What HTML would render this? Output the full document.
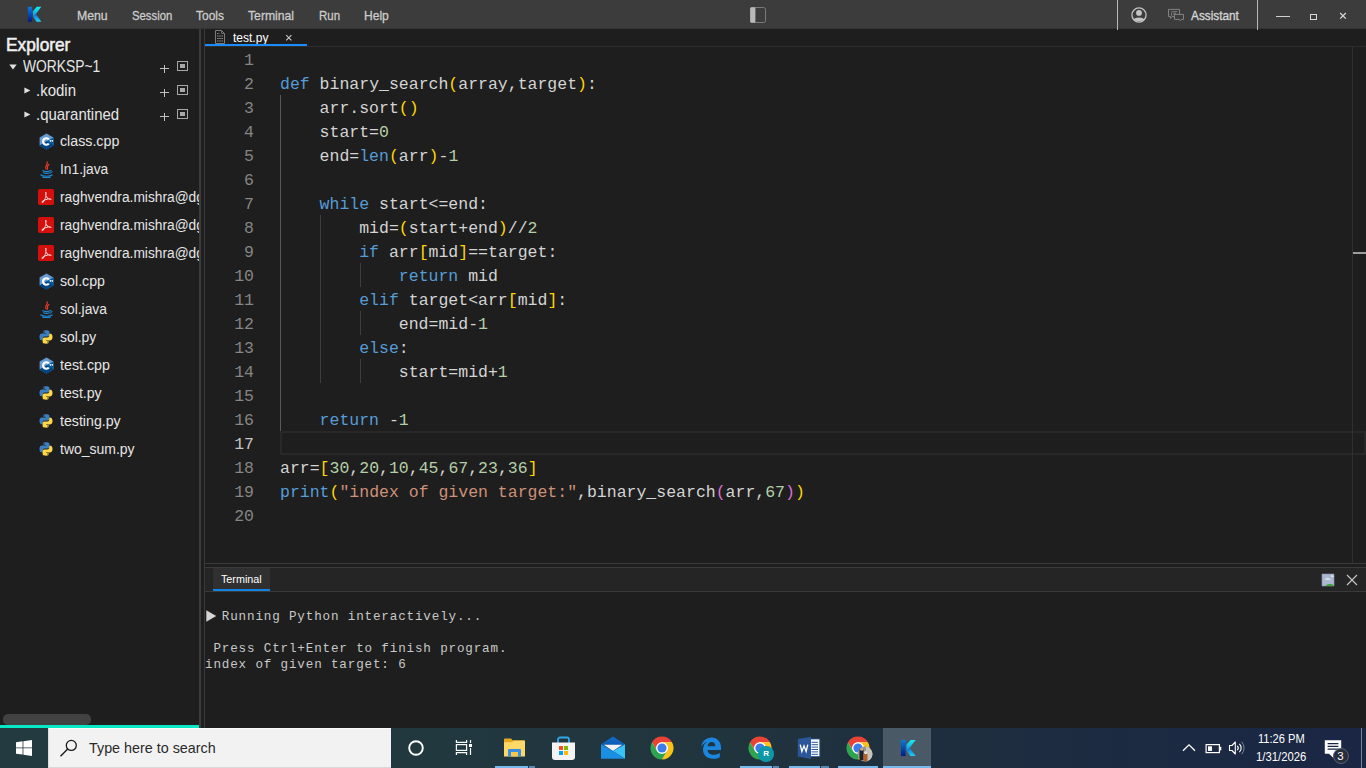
<!DOCTYPE html>
<html lang="en">
<head>
<meta charset="utf-8">
<title>test.py</title>
<style>
*{box-sizing:border-box;margin:0;padding:0}
html,body{width:1366px;height:768px;overflow:hidden;background:#1e1e1e;font-family:"Liberation Sans",sans-serif}
.abs{position:absolute}
.t{position:absolute;white-space:nowrap;transform-origin:0 50%}
#sidebar{position:absolute;left:0;top:0;width:199px;height:728px;overflow:hidden}
.ln{position:absolute;left:205px;width:49px;text-align:right;height:24px;line-height:24px;font-family:"Liberation Mono",monospace;font-size:16.5px;color:#858585}
.cl{position:absolute;left:280px;height:24px;line-height:24px;font-family:"Liberation Mono",monospace;font-size:16.5px;color:#d4d4d4;white-space:pre}
.k{color:#569cd6}.n{color:#b5cea8}.s{color:#ce9178}.y{color:#ffd700}.p{color:#da70d6}
.guide{position:absolute;width:1px;background:#404040}
.tl{position:absolute;left:205px;height:16px;line-height:16px;font-family:"Liberation Mono",monospace;font-size:12.6px;letter-spacing:0.84px;color:#c8c8c8;white-space:pre}
#taskbar{position:absolute;left:0;top:728px;width:1366px;height:40px;background:linear-gradient(90deg,#233a41 0%,#22383f 32%,#20343e 54%,#1e2e3e 69%,#1c2a42 84%,#1a2644 100%)}
.run{position:absolute;top:38px;height:2px;background:#76b9ed}
</style>
</head>
<body>
<div class="abs" style="left:0;top:0;width:1366px;height:28px;background:#3c3c3c"></div>
<div class="abs" style="left:0;top:28px;width:1366px;height:1px;background:#343434"></div>
<svg class="abs" style="left:26px;top:5px" width="17" height="18" viewBox="0 0 17 18">
<defs><linearGradient id="kg1" x1="0" y1="0" x2="0" y2="1"><stop offset="0" stop-color="#0b7cdc"/><stop offset="1" stop-color="#021a80"/></linearGradient>
<linearGradient id="kg2" x1="0" y1="0" x2="0" y2="1"><stop offset="0" stop-color="#12f2f2"/><stop offset="1" stop-color="#1a8ee0"/></linearGradient>
<linearGradient id="kg3" x1="0" y1="0" x2="0" y2="1"><stop offset="0" stop-color="#0a6ed0"/><stop offset="1" stop-color="#22d4f4"/></linearGradient></defs>
<rect x="1.800" y="1.800" width="4.300" height="14.900" fill="url(#kg1)"/>
<path d="M10.800 1.800 H15.300 L10 9.100 L6.900 11.400 V6.300 Z" fill="url(#kg2)"/>
<path d="M6.900 11.400 L10 9.100 L15.300 16.700 H10.600 Z" fill="url(#kg3)"/></svg>
<div class="t" style="left:76.70px;top:7.79px;height:16px;line-height:16px;font-size:13.3px;color:#cccccc;-webkit-text-stroke:0.3px #cccccc;transform:scaleX(0.923);">Menu</div>
<div class="t" style="left:131.70px;top:7.79px;height:16px;line-height:16px;font-size:13.3px;color:#cccccc;-webkit-text-stroke:0.3px #cccccc;transform:scaleX(0.852);">Session</div>
<div class="t" style="left:196.00px;top:7.79px;height:16px;line-height:16px;font-size:13.3px;color:#cccccc;-webkit-text-stroke:0.3px #cccccc;transform:scaleX(0.902);">Tools</div>
<div class="t" style="left:248.30px;top:7.79px;height:16px;line-height:16px;font-size:13.3px;color:#cccccc;-webkit-text-stroke:0.3px #cccccc;transform:scaleX(0.917);">Terminal</div>
<div class="t" style="left:318.80px;top:7.79px;height:16px;line-height:16px;font-size:13.3px;color:#cccccc;-webkit-text-stroke:0.3px #cccccc;transform:scaleX(0.861);">Run</div>
<div class="t" style="left:364.40px;top:7.79px;height:16px;line-height:16px;font-size:13.3px;color:#cccccc;-webkit-text-stroke:0.3px #cccccc;transform:scaleX(0.907);">Help</div>
<svg class="abs" style="left:749px;top:6px" width="18" height="18" viewBox="0 0 18 18"><rect x="1.500" y="1.500" width="15" height="15" rx="1.800" fill="none" stroke="#7a7a7a" stroke-width="1"/><rect x="1.200" y="1.200" width="5.200" height="15.600" rx="1.200" fill="#b8b8b8"/></svg>
<div class="abs" style="left:1117px;top:0;width:1px;height:30px;background:#b8b8b8"></div>
<svg class="abs" style="left:1130px;top:6px" width="18" height="18" viewBox="0 0 18 18"><circle cx="9" cy="9" r="7.100" fill="none" stroke="#c4c4c4" stroke-width="1.300"/><circle cx="9" cy="6.900" r="2.900" fill="#c4c4c4"/><path d="M3.600 13.600 C5 10.700 13 10.700 14.400 13.600 C13 15.800 5 15.800 3.600 13.600Z" fill="#c4c4c4"/></svg>
<svg class="abs" style="left:1167px;top:8px" width="18" height="14" viewBox="0 0 18 14"><path d="M1.500 1.400 H12.500 V8.600 H5 L3.600 10.400 V8.600 H1.500Z" fill="none" stroke="#828282" stroke-width="1"/><path d="M4.500 7.800 V4.600 a1 1 0 0 1 1 -1 H10.200" fill="none" stroke="#7a7a7a" stroke-width="1"/><circle cx="7.600" cy="5.800" r="1.500" fill="#6a6a6a"/><path d="M7.500 6.400 H16.500 V11.400 H14.600 L13.300 12.900 L12.400 11.400 H7.500Z" fill="#3c3c3c" stroke="#828282" stroke-width="1"/></svg>
<div class="t" style="left:1191.00px;top:8.19px;height:16px;line-height:16px;font-size:13.3px;color:#d4d4d4;-webkit-text-stroke:0.35px #d4d4d4;transform:scaleX(0.888);">Assistant</div>
<div class="abs" style="left:1257px;top:0;width:1px;height:30px;background:#b8b8b8"></div>
<div class="abs" style="left:1276px;top:16px;width:14px;height:1px;background:#d0d0d0"></div>
<div class="abs" style="left:1310px;top:14px;width:7px;height:6px;border:1px solid #d8d8d8"></div>
<svg class="abs" style="left:1339px;top:12px" width="8" height="8" viewBox="0 0 8 8"><path d="M1.200 1 L6.800 6.600 M6.800 1 L1.200 6.600" stroke="#d8d8d8" stroke-width="1.300"/></svg>
<div id="sidebar">
<svg width="0" height="0" style="position:absolute"><defs>
<symbol id="i-cpp" viewBox="0 0 32 32"><path d="M16 1 L29 8.500 V23.500 L16 31 L3 23.500 V8.500 Z" fill="#659ad2"/><path d="M29 8.500 V23.500 L16 31 L3 23.500 Z" fill="#00599c"/><path d="M16 16 L29 23.500 L16 31 L3 23.500 Z" fill="#004482"/><path d="M22.200 11.200 A8.200 8.200 0 1 0 22.200 20.800 L18.600 18.700 A4 4 0 1 1 18.600 13.300 Z" fill="#fff"/><path d="M21.300 14.300 h1.300 v-1.300 h1.300 v1.300 h1.300 v1.300 h-1.300 v1.300 h-1.300 v-1.300 h-1.300 z M25.400 14.300 h1.000 v-1.300 h1.100 v1.300 h1.000 v1.300 h-1.000 v1.300 h-1.100 v-1.300 h-1.000 z" fill="#fff"/></symbol>
<symbol id="i-java" viewBox="0 0 32 32"><path d="M17 1.500 C20.500 6 11 9 15.500 15.500 M20.500 6.500 C15.500 10 19 12 17.800 15.500" fill="none" stroke="#e33a2c" stroke-width="2.200" stroke-linecap="round"/><path d="M9 18.500 C12 20.300 20 20.300 23 18.500 M10.500 22.300 C13 23.800 19 23.800 21.500 22.300 M5.500 26.300 C9 29.600 23 29.600 26.500 26.300 M9 30.500 C13 31.500 19 31.500 23 30.500" fill="none" stroke="#1f8ad6" stroke-width="2.200" stroke-linecap="round"/><path d="M23.500 18.500 C28 17.500 27.500 22 23 22.800" fill="none" stroke="#1f8ad6" stroke-width="1.800" stroke-linecap="round"/></symbol>
<symbol id="i-pdf" viewBox="0 0 32 32"><rect x="0" y="0" width="32" height="32" rx="3.500" fill="#d4100c"/><path d="M15.200 6.200 C17.600 5.600 17.600 9.800 16.400 13.200 C17.600 16 19.600 18 21.600 19 C24.500 18.600 27.200 19.200 26.800 21 C26.300 22.800 23.500 22.200 21.200 20.600 C18.600 21 15.800 21.800 13.400 22.800 C11.600 26 9.200 28.200 7.600 27.200 C6 26 8.800 23.400 12.200 22 C13.400 19.600 14.600 16.600 15.200 13.800 C14.200 11 13.600 6.800 15.200 6.200Z M15.800 7.400 C15.200 8 15.400 10.400 15.900 12 C16.400 10.200 16.400 7.600 15.800 7.400Z M16 15.400 C15.400 17.400 14.600 19.400 13.800 21.200 C15.800 20.400 17.800 19.900 19.800 19.500 C18.300 18.500 17 17 16 15.400Z M22.800 20.200 C24.200 21 25.600 21.200 25.800 20.800 C26 20.400 24.600 20 22.800 20.200Z M11.600 23.600 C9.600 24.600 8.200 26 8.500 26.400 C8.900 26.700 10.400 25.600 11.600 23.600Z" fill="#fff"/></symbol>
<symbol id="i-py" viewBox="0 0 32 32"><path d="M15.800 2.500 C10.500 2.500 10.800 4.800 10.800 4.800 V8.200 H16 V9.200 H7.600 C7.600 9.200 3 8.800 3 15.800 C3 22.800 7 22.400 7 22.400 H9.600 V19 C9.600 19 9.400 15 13.600 15 H19 C19 15 22.800 15.100 22.800 11.300 V5.800 C22.800 5.800 23.400 2.500 15.800 2.500Z M12.600 4.800 A1.100 1.100 0 1 1 12.600 7 A1.100 1.100 0 0 1 12.600 4.800Z" fill="#3c7ebf"/><path d="M16.200 29.500 C21.500 29.500 21.200 27.200 21.200 27.200 V23.800 H16 V22.800 H24.400 C24.400 22.800 29 23.200 29 16.200 C29 9.200 25 9.600 25 9.600 H22.400 V13 C22.400 13 22.600 17 18.400 17 H13 C13 17 9.200 16.900 9.200 20.700 V26.200 C9.200 26.200 8.600 29.500 16.200 29.500Z M19.400 27.200 A1.100 1.100 0 1 1 19.400 25 A1.100 1.100 0 0 1 19.400 27.200Z" fill="#ffd848"/></symbol>
</defs></svg>
<div class="t" style="left:6.10px;top:33.12px;height:23px;line-height:23px;font-size:19px;color:#f0f0f0;-webkit-text-stroke:0.55px #f0f0f0;transform:scaleX(0.91);">Explorer</div>
<svg class="abs" style="left:9px;top:64px" width="8" height="6" viewBox="0 0 8 6"><path d="M0.300 0.600 H7.700 L4 5.400Z" fill="#e0e0e0"/></svg>
<div class="t" style="left:22.50px;top:56.42px;height:20px;line-height:20px;font-size:16.4px;color:#e6e6e6;transform:scaleX(0.844);">WORKSP~1</div>
<svg class="abs" style="left:23.500px;top:87px" width="7" height="7" viewBox="0 0 7 7"><path d="M0.400 0.600 V6.400 L6.400 3.500Z" fill="#e0e0e0"/></svg>
<div class="t" style="left:36.20px;top:80.12px;height:20px;line-height:20px;font-size:16.4px;color:#e6e6e6;transform:scaleX(0.915);">.kodin</div>
<svg class="abs" style="left:23.500px;top:111px" width="7" height="7" viewBox="0 0 7 7"><path d="M0.400 0.600 V6.400 L6.400 3.500Z" fill="#e0e0e0"/></svg>
<div class="t" style="left:36.20px;top:104.12px;height:20px;line-height:20px;font-size:16.4px;color:#e6e6e6;transform:scaleX(0.912);">.quarantined</div>
<div class="abs" style="left:160px;top:68px;width:9px;height:1px;background:#c0c0c0"></div><div class="abs" style="left:164px;top:65px;width:1px;height:8px;background:#c0c0c0"></div>
<div class="abs" style="left:177px;top:61px;width:11px;height:10px;border:1px solid #a8a8a8"></div><div class="abs" style="left:180px;top:64px;width:5px;height:4px;background:#a8a8a8"></div>
<div class="abs" style="left:160px;top:92px;width:9px;height:1px;background:#c0c0c0"></div><div class="abs" style="left:164px;top:89px;width:1px;height:8px;background:#c0c0c0"></div>
<div class="abs" style="left:177px;top:85px;width:11px;height:10px;border:1px solid #a8a8a8"></div><div class="abs" style="left:180px;top:88px;width:5px;height:4px;background:#a8a8a8"></div>
<div class="abs" style="left:160px;top:116px;width:9px;height:1px;background:#c0c0c0"></div><div class="abs" style="left:164px;top:113px;width:1px;height:8px;background:#c0c0c0"></div>
<div class="abs" style="left:177px;top:109px;width:11px;height:10px;border:1px solid #a8a8a8"></div><div class="abs" style="left:180px;top:112px;width:5px;height:4px;background:#a8a8a8"></div>
<svg class="abs" style="left:37.500px;top:132.5px" width="17" height="17"><use href="#i-cpp"/></svg>
<div class="t" style="left:60.20px;top:132.10px;height:18px;line-height:18px;font-size:15.3px;color:#e6e6e6;transform:scaleX(0.93);">class.cpp</div>
<svg class="abs" style="left:38px;top:160.5px" width="17" height="17"><use href="#i-java"/></svg>
<div class="t" style="left:60.20px;top:160.10px;height:18px;line-height:18px;font-size:15.3px;color:#e6e6e6;transform:scaleX(0.901);">In1.java</div>
<svg class="abs" style="left:38px;top:189px" width="16" height="16"><use href="#i-pdf"/></svg>
<div class="t" style="left:60.20px;top:188.10px;height:18px;line-height:18px;font-size:15.3px;color:#e6e6e6;transform:scaleX(0.899);">raghvendra.mishra@dg</div>
<svg class="abs" style="left:38px;top:217px" width="16" height="16"><use href="#i-pdf"/></svg>
<div class="t" style="left:60.20px;top:216.10px;height:18px;line-height:18px;font-size:15.3px;color:#e6e6e6;transform:scaleX(0.899);">raghvendra.mishra@dg</div>
<svg class="abs" style="left:38px;top:245px" width="16" height="16"><use href="#i-pdf"/></svg>
<div class="t" style="left:60.20px;top:244.10px;height:18px;line-height:18px;font-size:15.3px;color:#e6e6e6;transform:scaleX(0.899);">raghvendra.mishra@dg</div>
<svg class="abs" style="left:37.500px;top:272.5px" width="17" height="17"><use href="#i-cpp"/></svg>
<div class="t" style="left:60.20px;top:272.10px;height:18px;line-height:18px;font-size:15.3px;color:#e6e6e6;transform:scaleX(0.928);">sol.cpp</div>
<svg class="abs" style="left:38px;top:300.5px" width="17" height="17"><use href="#i-java"/></svg>
<div class="t" style="left:60.20px;top:300.10px;height:18px;line-height:18px;font-size:15.3px;color:#e6e6e6;transform:scaleX(0.906);">sol.java</div>
<svg class="abs" style="left:38px;top:329px" width="16" height="16"><use href="#i-py"/></svg>
<div class="t" style="left:60.20px;top:328.10px;height:18px;line-height:18px;font-size:15.3px;color:#e6e6e6;transform:scaleX(0.906);">sol.py</div>
<svg class="abs" style="left:37.500px;top:356.5px" width="17" height="17"><use href="#i-cpp"/></svg>
<div class="t" style="left:60.20px;top:356.10px;height:18px;line-height:18px;font-size:15.3px;color:#e6e6e6;transform:scaleX(0.933);">test.cpp</div>
<svg class="abs" style="left:38px;top:385px" width="16" height="16"><use href="#i-py"/></svg>
<div class="t" style="left:60.20px;top:384.10px;height:18px;line-height:18px;font-size:15.3px;color:#e6e6e6;transform:scaleX(0.925);">test.py</div>
<svg class="abs" style="left:38px;top:413px" width="16" height="16"><use href="#i-py"/></svg>
<div class="t" style="left:60.20px;top:412.10px;height:18px;line-height:18px;font-size:15.3px;color:#e6e6e6;transform:scaleX(0.927);">testing.py</div>
<svg class="abs" style="left:38px;top:441px" width="16" height="16"><use href="#i-py"/></svg>
<div class="t" style="left:60.20px;top:440.10px;height:18px;line-height:18px;font-size:15.3px;color:#e6e6e6;transform:scaleX(0.913);">two_sum.py</div>
<div class="abs" style="left:3px;top:714px;width:88px;height:11px;border-radius:5px;background:#424242"></div>
<div class="abs" style="left:0;top:725px;width:199px;height:3px;background:#08e8c4"></div>
</div>
<div class="abs" style="left:199px;top:29px;width:2px;height:699px;background:#3c3c3c"></div>
<div class="abs" style="left:204px;top:29px;width:1px;height:699px;background:#393939"></div>
<div class="abs" style="left:205px;top:46px;width:1161px;height:1px;background:#2e2e2e"></div>
<svg class="abs" style="left:215px;top:30px" width="10" height="14" viewBox="0 0 10 14"><path d="M0.500 0.500 H6.500 L9.500 3.500 V13.500 H0.500Z" fill="none" stroke="#7c7c7c" stroke-width="1"/><path d="M6.500 0.500 V3.500 H9.500" fill="none" stroke="#7c7c7c" stroke-width="0.800"/><path d="M2 6 H8 M2 8.500 H8 M2 11 H8 M2 3.500 H4.500" stroke="#8a8a8a" stroke-width="1.200" stroke-dasharray="1.600 0.600"/></svg>
<div class="t" style="left:233.00px;top:29.90px;height:16px;line-height:16px;font-size:13px;color:#ffffff;transform:scaleX(0.924);">test.py</div>
<svg class="abs" style="left:285px;top:34px" width="8" height="8" viewBox="0 0 8 8"><path d="M1.200 1.200 L6.400 6.400 M6.400 1.200 L1.200 6.400" stroke="#cccccc" stroke-width="1.050"/></svg>
<div class="abs" style="left:205px;top:44px;width:102px;height:2px;background:#1a8cff"></div>
<div class="abs" style="left:280px;top:431px;width:1086px;height:24px;border:2px solid #282828"></div>
<div class="abs" style="left:1352px;top:47px;width:1px;height:516px;background:#303030"></div>
<div class="abs" style="left:1353px;top:252px;width:13px;height:2px;background:#9c9c9a"></div>
<div class="guide" style="background:#585858;left:280px;top:95px;height:336px"></div>
<div class="guide" style="background:#3e3e3e;left:320px;top:215px;height:168px"></div>
<div class="guide" style="background:#3e3e3e;left:360px;top:263px;height:24px"></div>
<div class="guide" style="background:#3e3e3e;left:360px;top:311px;height:24px"></div>
<div class="guide" style="background:#3e3e3e;left:360px;top:359px;height:24px"></div>
<div class="ln" style="top:49px">1</div>
<div class="ln" style="top:73px">2</div><div class="cl" style="top:73px"><span class="k">def</span> binary_search<span class="y">(</span>array,target<span class="y">)</span>:</div>
<div class="ln" style="top:97px">3</div><div class="cl" style="top:97px">    arr.sort<span class="y">()</span></div>
<div class="ln" style="top:121px">4</div><div class="cl" style="top:121px">    start=<span class="n">0</span></div>
<div class="ln" style="top:145px">5</div><div class="cl" style="top:145px">    end=<span class="k">len</span><span class="y">(</span>arr<span class="y">)</span>-<span class="n">1</span></div>
<div class="ln" style="top:169px">6</div>
<div class="ln" style="top:193px">7</div><div class="cl" style="top:193px">    <span class="k">while</span> start&lt;=end:</div>
<div class="ln" style="top:217px">8</div><div class="cl" style="top:217px">        mid=<span class="y">(</span>start+end<span class="y">)</span>//<span class="n">2</span></div>
<div class="ln" style="top:241px">9</div><div class="cl" style="top:241px">        <span class="k">if</span> arr<span class="y">[</span>mid<span class="y">]</span>==target:</div>
<div class="ln" style="top:265px">10</div><div class="cl" style="top:265px">            <span class="k">return</span> mid</div>
<div class="ln" style="top:289px">11</div><div class="cl" style="top:289px">        <span class="k">elif</span> target&lt;arr<span class="y">[</span>mid<span class="y">]</span>:</div>
<div class="ln" style="top:313px">12</div><div class="cl" style="top:313px">            end=mid-<span class="n">1</span></div>
<div class="ln" style="top:337px">13</div><div class="cl" style="top:337px">        <span class="k">else</span>:</div>
<div class="ln" style="top:361px">14</div><div class="cl" style="top:361px">            start=mid+<span class="n">1</span></div>
<div class="ln" style="top:385px">15</div>
<div class="ln" style="top:409px">16</div><div class="cl" style="top:409px">    <span class="k">return</span> -<span class="n">1</span></div>
<div class="ln" style="top:433px;color:#c6c6c6">17</div>
<div class="ln" style="top:457px">18</div><div class="cl" style="top:457px">arr=<span class="y">[</span><span class="n">30</span>,<span class="n">20</span>,<span class="n">10</span>,<span class="n">45</span>,<span class="n">67</span>,<span class="n">23</span>,<span class="n">36</span><span class="y">]</span></div>
<div class="ln" style="top:481px">19</div><div class="cl" style="top:481px"><span class="k">print</span><span class="y">(</span><span class="s">"index of given target:"</span>,binary_search<span class="p">(</span>arr,<span class="n">67</span><span class="p">)</span><span class="y">)</span></div>
<div class="ln" style="top:505px">20</div>
<div class="abs" style="left:205px;top:563px;width:1161px;height:1px;background:#3a3a3a"></div>
<div class="abs" style="left:205px;top:567px;width:1161px;height:1px;background:#3a3a3a"></div>
<div class="abs" style="left:205px;top:568px;width:1161px;height:23px;background:#252526"></div>
<div class="abs" style="left:205px;top:591px;width:1161px;height:1px;background:#3a3a3a"></div>
<div class="abs" style="left:213px;top:568px;width:57px;height:21px;background:#303030"></div>
<div class="abs" style="left:213px;top:589px;width:57px;height:2px;background:#0f84e4"></div>
<div class="t" style="left:221.40px;top:572.01px;height:14px;line-height:14px;font-size:11.8px;color:#ffffff;transform:scaleX(0.911);">Terminal</div>
<svg class="abs" style="left:1321px;top:573px" width="14" height="14" viewBox="0 0 14 14"><rect x="1" y="1" width="12" height="12" fill="#a9b7d1"/><path d="M1 1 H13 V13 H1Z" fill="none" stroke="#8d96a8" stroke-width="0.600"/><path d="M10.500 1 V4 H13Z" fill="#e8e8e8"/><path d="M4 7 C4 5 7 4 8 5.500 C9.500 5 10 7 9 7Z" fill="#dcdcdc"/><path d="M4.500 13 C6 10.500 11 10.500 12.800 12.500 V13Z" fill="#3fa33a"/></svg>
<svg class="abs" style="left:1346px;top:574px" width="12" height="12" viewBox="0 0 12 12"><path d="M1 1 L11 11 M11 1 L1 11" stroke="#c8c8c8" stroke-width="1.100"/></svg>
<svg class="abs" style="left:206px;top:609.500px" width="11" height="12" viewBox="0 0 11 12"><path d="M0.300 0.300 V11.700 L10.300 6Z" fill="#d4d4d4"/></svg>
<div class="tl" style="top:609px">  Running Python interactively...</div>
<div class="tl" style="top:641px"> Press Ctrl+Enter to finish program.</div>
<div class="tl" style="top:657px">index of given target: 6</div>
<div id="taskbar">
<svg width="0" height="0" style="position:absolute"><defs>
<symbol id="i-chrome" viewBox="0 0 48 48"><circle cx="24" cy="24" r="22" fill="#fff"/>
<path d="M4.080 12.500 A23 23 0 0 1 43.920 12.500 L24 12.500 A11.500 11.500 0 0 0 14.040 29.750 Z" fill="#ea4335"/>
<path d="M43.920 12.500 A23 23 0 0 1 24 47 L33.960 29.750 A11.500 11.500 0 0 0 24 12.500 Z" fill="#fbc116"/>
<path d="M24 47 A23 23 0 0 1 4.080 12.500 L14.040 29.750 A11.500 11.500 0 0 0 33.960 29.750 Z" fill="#2da44e"/>
<circle cx="24" cy="24" r="11.600" fill="#fff"/><circle cx="24" cy="24" r="9.200" fill="#3b7ded"/></symbol>
<linearGradient id="kt1" x1="0" y1="0" x2="0" y2="1"><stop offset="0" stop-color="#1a78d6"/><stop offset="1" stop-color="#0b318a"/></linearGradient>
<linearGradient id="kt2" x1="0" y1="0" x2="1" y2="1"><stop offset="0" stop-color="#22e0ea"/><stop offset="1" stop-color="#1c8fdc"/></linearGradient>
</defs></svg>
<svg class="abs" style="left:16px;top:12px" width="16" height="16" viewBox="0 0 18 18"><path d="M0 2.600 L7.400 1.500 V8.500 H0Z M8.300 1.400 L18 0 V8.500 H8.300Z M0 9.400 H7.400 V16.400 L0 15.400Z M8.300 9.400 H18 V18 L8.300 16.600Z" fill="#fff"/></svg>
<div class="abs" style="left:48px;top:0;width:343px;height:40px;background:#f2f2f2;border-left:1px solid #dcdcdc;border-top:1px solid #fafafa;border-bottom:1px solid #d8d8d8"></div>
<svg class="abs" style="left:59px;top:10px" width="20" height="20" viewBox="0 0 20 20"><circle cx="12.300" cy="7.400" r="5" fill="none" stroke="#1a1a1a" stroke-width="1.300"/><path d="M8.700 11 L1.500 18.200" stroke="#1a1a1a" stroke-width="1.400"/></svg>
<svg class="abs" style="left:406px;top:10px" width="20" height="20" viewBox="0 0 20 20"><circle cx="10" cy="10" r="6.800" fill="none" stroke="#fff" stroke-width="1.900"/></svg>
<svg class="abs" style="left:455px;top:11px" width="18" height="17" viewBox="0 0 18 17"><path d="M1.400 1 V3.400 H11.600 V1 M1.400 16.100 V13.700 H11.600 V16.100" stroke="#fff" stroke-width="1.200" fill="none"/><rect x="1.400" y="5.600" width="10.200" height="5.800" fill="none" stroke="#fff" stroke-width="1.200"/><path d="M15.500 1 V4 M15.500 9 V16.100" stroke="#fff" stroke-width="1.200"/><rect x="14" y="5" width="3" height="3" fill="#fff"/></svg>
<svg class="abs" style="left:503px;top:10px" width="23" height="19" viewBox="0 0 23 19"><path d="M1 1.500 a1 1 0 0 1 1 -1 H8 L9.500 2.200 H21 a1 1 0 0 1 1 1 V18 H1Z" fill="#e8a820"/><path d="M1 4.300 H9 L10.500 2.800 H22 V18.500 H1Z" fill="#fbd867"/><path d="M5 18.500 V12 a1 1 0 0 1 1 -1 H17 a1 1 0 0 1 1 1 V18.500 H14.800 V14 H8.200 V18.500Z" fill="#3a8de0"/><rect x="8.200" y="14" width="6.600" height="4.500" fill="#f5c84a"/></svg>
<div class="run" style="left:495px;width:33px"></div><div class="run" style="left:529px;width:6px;background:#5889b5"></div>
<svg class="abs" style="left:551px;top:8px" width="25" height="25" viewBox="0 0 25 25"><path d="M7 7 V3.500 a2 2 0 0 1 2 -2 H16 a2 2 0 0 1 2 2 V7" fill="none" stroke="#2fa7e8" stroke-width="1.800"/><path d="M1 6.500 H24 V21 a3 3 0 0 1 -3 3 H4 a3 3 0 0 1 -3 -3Z" fill="#f4f4f4"/><rect x="8" y="10" width="4" height="4" fill="#f25022"/><rect x="13" y="10" width="4" height="4" fill="#7fba00"/><rect x="8" y="15" width="4" height="4" fill="#00a4ef"/><rect x="13" y="15" width="4" height="4" fill="#ffb900"/></svg>
<svg class="abs" style="left:600px;top:8px" width="26" height="23.200" viewBox="0 0 26 24" preserveAspectRatio="none"><defs><linearGradient id="mg1" x1="0" y1="0" x2="0" y2="1"><stop offset="0" stop-color="#0f6fce"/><stop offset="1" stop-color="#0a4a9c"/></linearGradient></defs><path d="M1 8.500 L13 0.500 L25 8.500 L13 16Z" fill="url(#mg1)"/><path d="M3.800 9 H22.200 L13 15.600Z" fill="#f4f2f0"/><path d="M25 8.500 L13 15.800 L25 23.500Z" fill="#38c2f6"/><path d="M1 8.500 L13 15.800 L25 23.500 H1Z" fill="#1b8fe2"/></svg>
<svg class="abs" style="left:650px;top:8px" width="24" height="24"><use href="#i-chrome"/></svg>
<svg class="abs" style="left:700px;top:9px" width="22" height="22" viewBox="0 0 22 22"><path d="M1.200 9.800 C2 4 6.500 0.500 11.500 0.500 C17.500 0.500 21 5 21 10.500 V13 H7.500 C7.800 16.200 10.300 17.800 13.500 17.800 C15.800 17.800 18 17.100 19.800 16 V20.300 C17.800 21.300 15.500 21.800 13 21.800 C7 21.800 3 18 3 12.500 C3 9 4.800 6.300 7.500 4.800 C4.600 5.600 2.500 7.400 1.200 9.800Z M7.600 9.200 H15.400 C15.300 6.600 14 5 11.600 5 C9.300 5 7.900 6.800 7.600 9.200Z" fill="#1a86e0"/></svg>
<svg class="abs" style="left:748px;top:8px" width="24" height="24"><use href="#i-chrome"/></svg>
<div class="abs" style="left:758.400px;top:18.200px;width:15.400px;height:15.400px;border-radius:50%;background:#0e98a7;color:#fff;font-size:8px;font-weight:bold;line-height:16px;text-align:center">R</div>
<div class="run" style="left:740px;width:32px"></div><div class="run" style="left:773px;width:6px;background:#5889b5"></div>
<svg class="abs" style="left:797px;top:8px" width="24" height="24" viewBox="0 0 24 24"><rect x="12" y="3" width="10.800" height="17.600" fill="#fff" stroke="#2b579a" stroke-width="0.800"/><path d="M14.500 6.300 H21 M14.500 8.700 H21 M14.500 11.100 H21 M14.500 13.500 H21 M14.500 15.900 H21 M14.500 18.300 H21" stroke="#2b579a" stroke-width="1"/><path d="M0.800 3 L14 0.700 V22.900 L0.800 20.600Z" fill="#2b579a"/><path d="M3.200 8.600 L4.900 15.400 L7 9.800 L9.100 15.400 L10.800 8.600" fill="none" stroke="#fff" stroke-width="1.350" stroke-linejoin="miter"/></svg>
<div class="run" style="left:789px;width:31px"></div><div class="run" style="left:821px;width:8px;background:#5889b5"></div>
<svg class="abs" style="left:846px;top:8px" width="24" height="24"><use href="#i-chrome"/></svg>
<svg class="abs" style="left:857px;top:18px" width="16" height="16" viewBox="0 0 16 16"><defs><clipPath id="av"><circle cx="8" cy="8" r="7.500"/></clipPath></defs><g clip-path="url(#av)"><rect width="16" height="16" fill="#9a968e"/><rect x="9" y="0" width="7" height="16" fill="#c9c4ba"/><rect x="2.500" y="3" width="4" height="11" fill="#20202c"/><rect x="6.500" y="8" width="4" height="8" fill="#b0622a"/><circle cx="4.800" cy="3.200" r="1.600" fill="#caa58a"/><circle cx="8.600" cy="6.600" r="1.500" fill="#e8e2dc"/></g></svg>
<div class="run" style="left:838px;width:40px"></div>
<div class="abs" style="left:883px;top:0;width:48px;height:40px;background:#4a5966"></div>
<svg class="abs" style="left:899.050px;top:10.450px" width="18.400" height="19.500" viewBox="0 0 17 18"><rect x="1.800" y="1.800" width="4.300" height="14.900" fill="url(#kg1)"/><path d="M10.800 1.800 H15.300 L10 9.100 L6.900 11.400 V6.300 Z" fill="url(#kg2)"/><path d="M6.900 11.400 L10 9.100 L15.300 16.700 H10.600 Z" fill="url(#kg3)"/></svg>
<div class="run" style="left:883px;width:48px"></div>
<svg class="abs" style="left:1182px;top:15px" width="14" height="9" viewBox="0 0 14 9"><path d="M1 7.800 L7 1.800 L13 7.800" fill="none" stroke="#fff" stroke-width="1.300"/></svg>
<svg class="abs" style="left:1205px;top:15px" width="17" height="11" viewBox="0 0 17 11"><rect x="1.100" y="1.600" width="13.300" height="8" fill="none" stroke="#fff" stroke-width="1.200"/><rect x="14.800" y="3.800" width="1.500" height="3.600" fill="#fff"/><rect x="3" y="3.300" width="4" height="4.600" fill="#fff"/></svg>
<svg class="abs" style="left:1228px;top:13px" width="18" height="14" viewBox="0 0 18 14"><path d="M1.500 4.500 H4 L7.300 1 V13 L4 9.500 H1.500Z" fill="none" stroke="#fff" stroke-width="1.100" stroke-linejoin="round"/><path d="M9.300 4.800 A3.300 3.300 0 0 1 9.300 9.200" fill="none" stroke="#fff" stroke-width="1.100"/><path d="M11.400 2.800 A6 6 0 0 1 11.400 11.200" fill="none" stroke="#fff" stroke-width="1.100"/><path d="M13.600 0.800 A9 9 0 0 1 13.600 13.200" fill="none" stroke="#7c889c" stroke-width="1"/></svg>
<svg class="abs" style="left:1324px;top:12px" width="18" height="19" viewBox="0 0 18 19"><path d="M0.800 0.300 H17.200 V13.700 H9.500 V18 L5 13.700 H0.800Z" fill="#fff"/><path d="M3.600 3.600 H14.400 M3.600 6.400 H14.400 M3.600 9.200 H14.400" stroke="#1a2744" stroke-width="1.200"/></svg>
<div class="abs" style="left:1332.500px;top:19.500px;width:16px;height:16px;border-radius:50%;background:#2a2e3a;border:1px solid #59607a;color:#fff;font-size:11.500px;line-height:14px;text-align:center">3</div>
<div class="abs" style="left:1361px;top:0;width:1px;height:40px;background:#7a8398"></div>
</div>
<div class="t" style="left:89.10px;top:738.94px;height:18px;line-height:18px;font-size:14.6px;color:#2a2a2a;transform:scaleX(0.982);">Type here to search</div>
<div class="t" style="left:1258.00px;top:731.71px;height:15px;line-height:15px;font-size:12.1px;color:#ffffff;transform:scaleX(0.918);">11:26 PM</div>
<div class="t" style="left:1256.40px;top:749.81px;height:15px;line-height:15px;font-size:12.1px;color:#ffffff;transform:scaleX(0.935);">1/31/2026</div>
</body>
</html>
